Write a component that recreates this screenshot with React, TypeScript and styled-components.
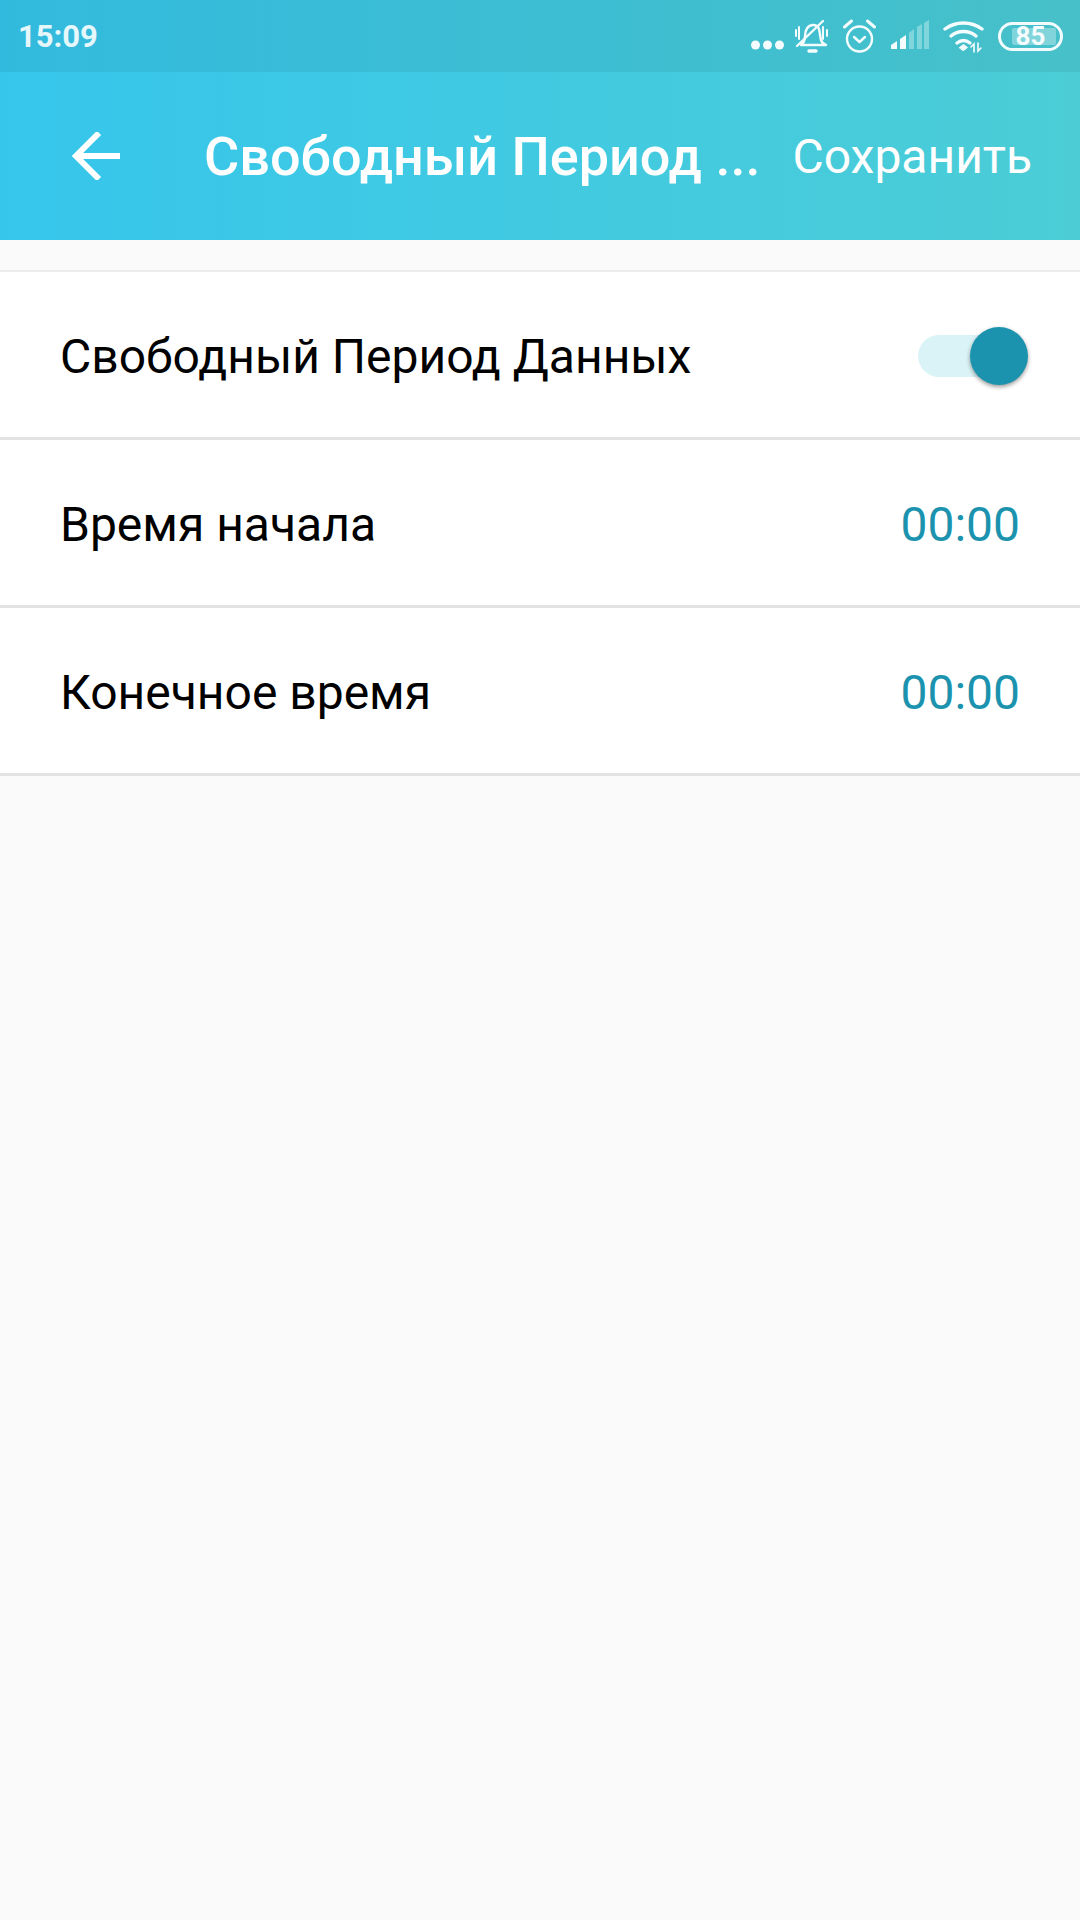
import React from "react";
import styled, { createGlobalStyle } from "styled-components";

const Global = createGlobalStyle`
  html, body { margin: 0; padding: 0; background: #fafafa; }
  #root { width: 1080px; height: 1920px; }
`;

const Page = styled.div`
  width: 1080px;
  height: 1920px;
  background: #fafafa;
  font-family: Roboto, "Noto Sans", sans-serif;
  display: flex;
  flex-direction: column;
  overflow: hidden;
`;

const Hero = styled.div`
  background: linear-gradient(90deg, #36c6ec 0%, #4ccdd6 100%);
  flex: none;
`;

const StatusBar = styled.div`
  height: 72px;
  background: rgba(0, 0, 0, 0.06);
  display: flex;
  align-items: center;
  padding: 0 17px 0 18px;
  color: #fff;
`;

const Clock = styled.span`
  font-size: 31px;
  font-weight: 700;
  color: #e6f7fb;
  flex: 1;
`;

const StatusIcons = styled.div`
  display: flex;
  align-items: center;
`;

const StatusIcon = styled.svg<{ $ml: number }>`
  display: block;
  flex: none;
  margin-left: ${(p) => p.$ml}px;
`;

const Battery = styled.div`
  position: relative;
  width: 65px;
  height: 29px;
  margin-left: 14px;
  box-sizing: border-box;
  border: 3px solid #f2fbfd;
  border-radius: 15px;
  display: flex;
  align-items: center;
  justify-content: center;
  font-size: 26px;
  font-weight: 700;
  color: #f4fcfd;
  overflow: hidden;
`;

const BatteryFill = styled.div`
  position: absolute;
  left: 11px;
  top: 3px;
  bottom: 3px;
  width: 44px;
  background: rgba(255, 255, 255, 0.32);
  border-radius: 2px;
`;

const BatteryLevel = styled.span`
  position: relative;
  line-height: 1;
`;

const Toolbar = styled.div`
  height: 168px;
  display: flex;
  align-items: center;
  color: #fff;
`;

const BackButton = styled.div`
  width: 204px;
  padding-left: 72px;
  box-sizing: border-box;
  flex: none;
  display: flex;
`;

const Title = styled.div`
  flex: 1;
  font-size: 54px;
  font-weight: 500;
  white-space: nowrap;
`;

const Save = styled.div`
  font-size: 48px;
  padding-right: 48px;
  flex: none;
`;

const List = styled.div`
  margin-top: 30px;
  background: #fff;
  border-top: 2px solid #ececec;
`;

const Row = styled.div`
  height: 165px;
  border-bottom: 3px solid #e3e3e3;
  display: flex;
  align-items: center;
  justify-content: space-between;
  box-sizing: content-box;
  padding: 0 60px 0 60px;
  font-size: 48px;
  color: #000;
`;

const RowText = styled.span`
  padding-top: 3px;
`;

const TimeValue = styled.span`
  color: #1b93ae;
  font-size: 48px;
  padding-top: 3px;
`;

const Switch = styled.div`
  position: relative;
  width: 102px;
  height: 42px;
  margin-top: 3px;
  background: #daf3f6;
  border-radius: 21px;
`;

const Knob = styled.div`
  position: absolute;
  right: -8px;
  top: -8px;
  width: 58px;
  height: 58px;
  border-radius: 50%;
  background: #1b93ae;
  box-shadow: 0 2px 4px rgba(0, 0, 0, 0.4);
`;

const rows = [
  { label: "Время начала", value: "00:00" },
  { label: "Конечное время", value: "00:00" },
];

export default function App() {
  return (
    <Page>
      <Global />
      <Hero>
        <StatusBar>
          <Clock>15:09</Clock>
          <StatusIcons>
            <StatusIcon $ml={0} width="33" height="36" viewBox="0 0 33 36" fill="#f4fcfd">
              <circle cx="4.5" cy="27" r="4.5" />
              <circle cx="16.5" cy="27" r="4.5" />
              <circle cx="28.5" cy="27" r="4.5" />
            </StatusIcon>
            <StatusIcon $ml={11} width="33" height="36" viewBox="0 0 33 36" fill="none" stroke="#f4fcfd" strokeWidth="2.4" strokeLinecap="round" strokeLinejoin="round">
              <path d="M6 27c3-2 4-5 4-9 0-6 3-11 8-11 3 0 5 1 6 4 1 3 1 8 2 11 1 3 2 4 5 5z" />
              <path d="M14 33h7" strokeWidth="3.4" />
              <path d="M2 28L28 3" />
              <path d="M1 12v6M4 9v12M28 9v12M32 12v6" strokeWidth="2" />
            </StatusIcon>
            <StatusIcon $ml={15} width="33" height="36" viewBox="0 0 33 36" fill="none" stroke="#f4fcfd" strokeWidth="2.4" strokeLinecap="round" strokeLinejoin="round">
              <circle cx="16.5" cy="21" r="12.5" />
              <path d="M11 19l5.5 5 5.5-5" />
              <path d="M1.5 9l7-6M31.5 9l-7-6" strokeWidth="3" />
            </StatusIcon>
            <StatusIcon $ml={15} width="38" height="36" viewBox="0 0 38 36">
              <path d="M0 31v-4l6-4v8z" fill="#f4fcfd" />
              <path d="M9 31V21l6-4v14z" fill="#f4fcfd" />
              <path d="M18 31V15l5-4v20z" fill="#f4fcfd" opacity=".35" />
              <path d="M26 31V9l5-3v25z" fill="#f4fcfd" opacity=".35" />
              <path d="M33 31V5l5-3v29z" fill="#f4fcfd" opacity=".35" />
            </StatusIcon>
            <StatusIcon $ml={14} width="41" height="36" viewBox="0 0 41 36" fill="none" stroke="#f4fcfd" strokeWidth="3.4" strokeLinecap="round">
              <path d="M2 11c11-8 26-8 37 0" />
              <path d="M8 18c7-6 18-6 25 0" />
              <path d="M14 25c4-3 9-3 13 0" />
              <path d="M16.500 29.500l4-3 4 3-4 3z" fill="#f4fcfd" strokeWidth="1" />
              <path d="M31 34v-8l-3 3M35 25v8l3-3" strokeWidth="1.6" />
            </StatusIcon>
            <Battery>
              <BatteryFill />
              <BatteryLevel>85</BatteryLevel>
            </Battery>
          </StatusIcons>
        </StatusBar>
        <Toolbar>
          <BackButton>
            <svg width="48" height="48" viewBox="0 0 48 48" fill="none" stroke="#fff" strokeWidth="6">
              <path d="M49 24H4" />
              <path d="M27 1L4 24l23 23" />
            </svg>
          </BackButton>
          <Title>Свободный Период ...</Title>
          <Save>Сохранить</Save>
        </Toolbar>
      </Hero>
      <List>
        <Row>
          <RowText>Свободный Период Данных</RowText>
          <Switch>
            <Knob />
          </Switch>
        </Row>
        {rows.map((r) => (
          <Row key={r.label}>
            <RowText>{r.label}</RowText>
            <TimeValue>{r.value}</TimeValue>
          </Row>
        ))}
      </List>
    </Page>
  );
}
